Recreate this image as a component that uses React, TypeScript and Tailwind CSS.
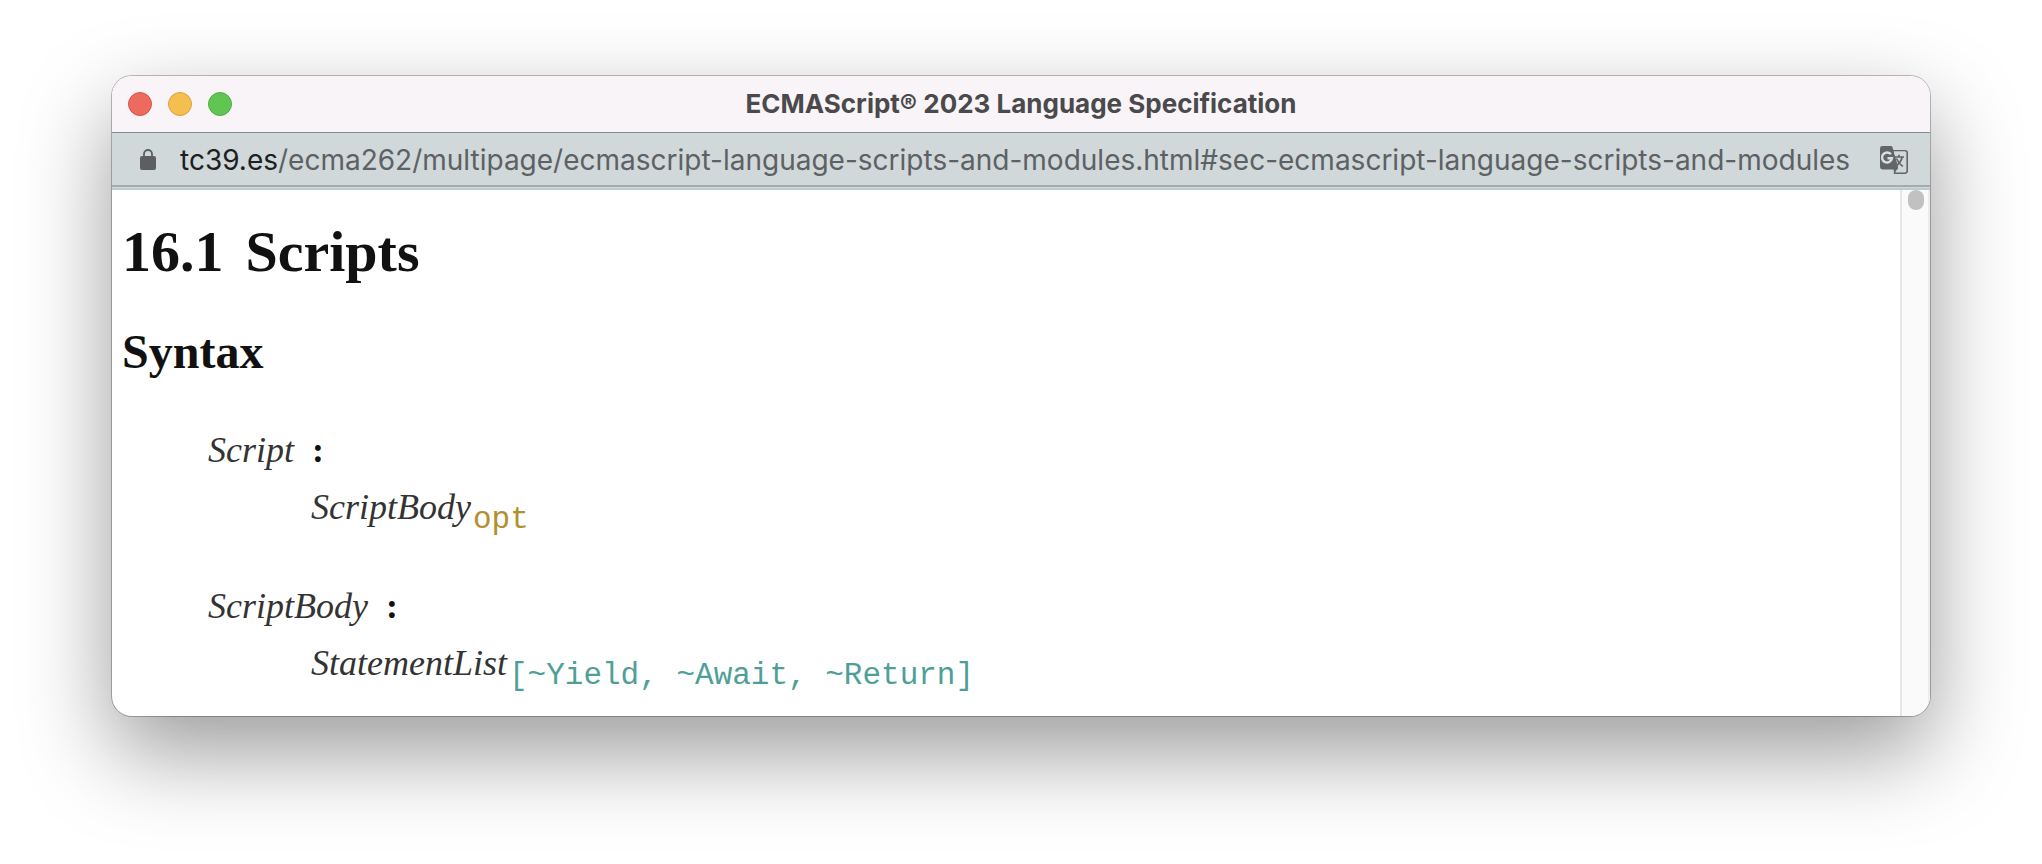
function LockIcon() {
  return (
    <svg viewBox="0 0 16 22" className="h-[22px] w-4 shrink-0" aria-hidden="true">
      <rect x="0" y="7" width="16" height="14" rx="2" fill="#5c5e62" />
      <path d="M4 8V5a4 4 0 0 1 8 0v3" fill="none" stroke="#5c5e62" strokeWidth="1.8" />
    </svg>
  );
}

function TranslateIcon() {
  return (
    <svg viewBox="0 0 28 28" className="size-7" aria-hidden="true">
      <path
        d="M12.5 4.7H25a2.2 2.2 0 0 1 2.2 2.2v18A2.2 2.2 0 0 1 25 27.2H14.6V23"
        fill="none"
        stroke="#636567"
        strokeWidth="1.6"
      />
      <path
        d="M2.4 0H11a1.5 1.5 0 0 1 1.4 1L18.200 20 18 22.500 15 26 13.500 23.500H2.400A2.400 2.400 0 0 1 0 21.100V2.400A2.400 2.400 0 0 1 2.400 0z"
        fill="#636567"
      />
      <path d="M13.800 5.500H25v19l-6.800-2L17.600 19z" fill="#d0d8da" />
      <path
        d="M14.800 11h9.200M19 8.700V11M22.200 11c-.8 3.800-3.200 7-6.600 9.200M16.400 12.500c1.400 3.200 3.500 5.900 6.400 8"
        fill="none"
        stroke="#636567"
        strokeWidth="1.7"
      />
      <path
        d="M10.900 8.300A5 5 0 1 0 12 12.200H7.500"
        fill="none"
        stroke="#d9e0e1"
        strokeWidth="2.400"
      />
    </svg>
  );
}

function TitleBar() {
  return (
    <header className="grid h-14 grid-cols-[1fr_auto_1fr] items-center bg-[#f8f4f8] px-4">
      <div className="flex gap-4">
        <button aria-label="Close" className="size-6 rounded-full border border-[#d8544a] bg-[#ec6a5e]" />
        <button aria-label="Minimize" className="size-6 rounded-full border border-[#d9a23c] bg-[#f5bf4f]" />
        <button aria-label="Zoom" className="size-6 rounded-full border border-[#4fae3d] bg-[#61c554]" />
      </div>
      <h1 className="font-[Inter,sans-serif] text-[26px] leading-8 font-bold whitespace-nowrap text-[#4a494b]">
        ECMAScript® 2023 Language Specification
      </h1>
    </header>
  );
}

function AddressBar() {
  return (
    <nav className="border-t border-[#858a8b] bg-[#d0d8da]">
      <div className="flex h-[52px] items-center pt-0.5 pr-[22px] pl-7">
        <LockIcon />
        <a
          href="#sec-ecmascript-language-scripts-and-modules"
          className="ml-6 min-w-0 flex-1 overflow-hidden font-[Inter,sans-serif] text-[28px] leading-9 whitespace-nowrap text-[#5d6164]"
        >
          <span className="text-[#1d1f22]">tc39.es</span>
          /ecma262/multipage/ecmascript-language-scripts-and-modules.html#sec-ecmascript-language-scripts-and-modules
        </a>
        <button aria-label="Translate this page" className="ml-5 shrink-0">
          <TranslateIcon />
        </button>
      </div>
      <div className="h-[5px] border-t-2 border-b-2 border-t-[#a3adaf] border-b-[#becccf]" />
    </nav>
  );
}

type ProductionProps = {
  name: string;
  body: string;
  suffix: string;
  suffixClass: string;
};

function Production({ name, body, suffix, suffixClass }: ProductionProps) {
  return (
    <dl className="font-['Liberation_Serif',serif] text-[36px] leading-[57px] text-[#333]">
      <dt>
        <i>{name}</i>
        <b className="ml-[18px] text-[#111]">:</b>
      </dt>
      <dd className="flex h-[57px] pl-[103px]">
        <i>{body}</i>
        <span className={suffixClass}>{suffix}</span>
      </dd>
    </dl>
  );
}

export default function App() {
  return (
    <div className="min-h-screen bg-white px-28 pt-[76px] pb-[148px]">
      <div className="overflow-hidden rounded-[20px] bg-white shadow-[0_0_0_1px_rgba(0,0,0,0.25),0_36px_90px_rgba(0,0,0,0.4)]">
        <TitleBar />
        <AddressBar />
        <div className="flex">
          <main className="min-w-0 flex-1 pt-7 pb-6 pl-[10px] font-['Liberation_Serif',serif] text-[#111]">
            <h2 className="flex gap-[22px] text-[58px] leading-[68px] font-bold">
              <span>16.1</span>
              <span>Scripts</span>
            </h2>
            <h3 className="mt-8 text-[48px] leading-[68px] font-bold">Syntax</h3>
            <div className="mt-9 flex flex-col gap-[42px] pl-[86px]">
              <Production
                name="Script"
                body="ScriptBody"
                suffix="opt"
                suffixClass="pt-3 pl-0.5 font-['Liberation_Mono',monospace] text-[31px] text-[#b1902f]"
              />
              <Production
                name="ScriptBody"
                body="StatementList"
                suffix="[~Yield, ~Await, ~Return]"
                suffixClass="pt-3 pl-0.5 font-['Liberation_Mono',monospace] text-[31px] text-[#4f9f98]"
              />
            </div>
          </main>
          <div className="flex w-[30px] border-r-2 border-l-2 border-r-[#ececec] border-l-[#e6e6e6] bg-[#fafafa] pl-1.5">
            <div className="h-5 w-4 rounded-full bg-[#c1c1c1]" />
          </div>
        </div>
      </div>
    </div>
  );
}
